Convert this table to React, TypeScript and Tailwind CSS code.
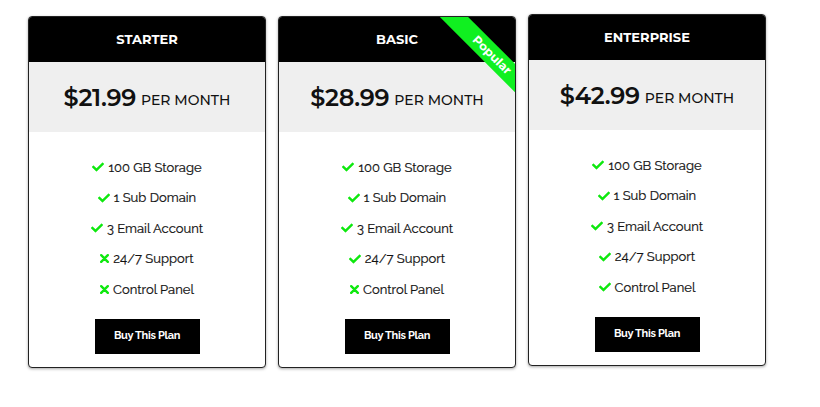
import { FaCheck } from 'react-icons/fa';

type Plan = {
  name: string;
  price: string;
  features: { label: string; ok: boolean }[];
  popular?: boolean;
  lift?: boolean;
};

const plans: Plan[] = [
  {
    name: 'STARTER',
    price: '$21.99',
    features: [
      { label: '100 GB Storage', ok: true },
      { label: '1 Sub Domain', ok: true },
      { label: '3 Email Account', ok: true },
      { label: '24/7 Support', ok: false },
      { label: 'Control Panel', ok: false },
    ],
  },
  {
    name: 'BASIC',
    price: '$28.99',
    popular: true,
    features: [
      { label: '100 GB Storage', ok: true },
      { label: '1 Sub Domain', ok: true },
      { label: '3 Email Account', ok: true },
      { label: '24/7 Support', ok: true },
      { label: 'Control Panel', ok: false },
    ],
  },
  {
    name: 'ENTERPRISE',
    price: '$42.99',
    lift: true,
    features: [
      { label: '100 GB Storage', ok: true },
      { label: '1 Sub Domain', ok: true },
      { label: '3 Email Account', ok: true },
      { label: '24/7 Support', ok: true },
      { label: 'Control Panel', ok: true },
    ],
  },
];

function Cross() {
  return (
    <svg width="9" height="9" viewBox="0 0 9 9" className="text-[#0ee80e]">
      <path d="M1.2 1.2 L7.8 7.8 M7.8 1.2 L1.2 7.8" stroke="currentColor" strokeWidth="2.4" strokeLinecap="round" />
    </svg>
  );
}

function Card({ plan }: { plan: Plan }) {
  return (
    <div
      className={
        'relative w-[238px] h-[352px] flex flex-col overflow-hidden rounded-[4px] border border-[#222] bg-white shadow-[0_1px_3px_rgba(0,0,0,0.35)] ' +
        (plan.lift ? '-translate-y-[2px]' : '')
      }
    >
      {/* header */}
      <div className="h-[45px] bg-black flex items-center justify-center text-white text-[13px] font-bold font-['Montserrat','Inter',sans-serif]">
        {plan.name}
      </div>

      {/* price */}
      <div className="h-[70px] bg-[#efefef] flex items-center justify-center gap-[5px] text-[#111] font-['Montserrat','Inter',sans-serif] pt-[2px]">
        <span className="text-[24px] font-semibold tracking-[-0.3px]">{plan.price}</span>
        <span className="text-[14px] font-medium mt-[4px]">PER MONTH</span>
      </div>

      {/* features */}
      <ul className="flex flex-col pt-[20px] font-['Raleway','Lato',sans-serif] text-[13px] text-[#111]">
        {plan.features.map((f) => (
          <li key={f.label} className="h-[30.5px] flex items-center justify-center gap-[4px]">
            {f.ok ? <FaCheck className="text-[#0ee80e] w-[12px] h-[12px]" /> : <Cross />}
            <span className="[-webkit-text-stroke:0.2px_#111]">{f.label}</span>
          </li>
        ))}
      </ul>

      <div className="flex justify-center mt-[14px]">
        <button className="w-[105px] h-[35px] bg-black text-white text-[11px] font-bold tracking-[-0.3px] font-['Raleway','Lato',sans-serif]">
          Buy This Plan
        </button>
      </div>

      {plan.popular && (
        <div className="absolute left-[133px] top-[28px] w-[160px] h-[20px] rotate-45 bg-[#10f020] flex items-center justify-center text-white text-[12px] font-bold font-['Montserrat','Inter',sans-serif]">
          Popular
        </div>
      )}
    </div>
  );
}

export default function App() {
  return (
    <div className="w-[820px] h-[407px] bg-white pt-[16px] pl-[28px]">
      <div className="flex items-start gap-[12px]">
        {plans.map((p) => (
          <Card key={p.name} plan={p} />
        ))}
      </div>
    </div>
  );
}
